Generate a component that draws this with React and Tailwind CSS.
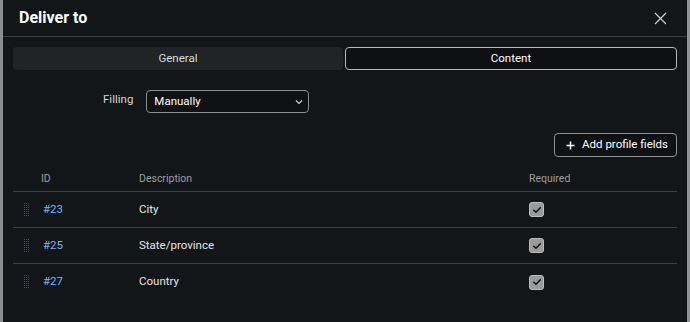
import React from "react";

const ROWS = [
  { id: "#23", desc: "City" },
  { id: "#25", desc: "State/province" },
  { id: "#27", desc: "Country" },
];

function DragHandle() {
  const dots = [];
  for (let r = 0; r < 7; r++) {
    for (let c = 0; c < 3; c++) {
      dots.push(<rect key={`${r}-${c}`} x={c * 2} y={r * 2} width="1" height="1" fill="#4a4d52" />);
    }
  }
  return (
    <svg width="6" height="14" viewBox="0 0 6 14">
      {dots}
    </svg>
  );
}

function Check() {
  return (
    <div className="w-[15px] h-[15px] rounded-[3px] bg-[#9a9a9a] border border-[#bdbdbd] flex items-center justify-center">
      <svg width="10" height="10" viewBox="0 0 10 10" fill="none">
        <path d="M1.8 5.2 L4 7.3 L8.3 2.8" stroke="#111" strokeWidth="1.5" strokeLinecap="round" strokeLinejoin="round" />
      </svg>
    </div>
  );
}

export default function App() {
  return (
    <div className="flex w-[690px] h-[322px] bg-[#8d8f91]" style={{ fontFamily: "Roboto, 'Noto Sans', sans-serif" }}>
      <div className="w-[3px] shrink-0 bg-[#8b8d8f]" />
      <div className="flex-1 bg-[#131619] flex flex-col">
        {/* Header */}
        <div className="h-[37px] flex items-center justify-between pl-[16px] pr-[20px] border-b border-[#3a3d41]">
          <h2 className="text-[16px] font-bold text-white">Deliver to</h2>
          <svg width="13" height="13" viewBox="0 0 13 13" fill="none">
            <path d="M1 1 L12 12 M12 1 L1 12" stroke="#c8c9cb" strokeWidth="1.3" />
          </svg>
        </div>

        <div className="px-[10px] pt-[10px]">
          {/* Tabs */}
          <div className="flex gap-[2px] h-[23px]">
            <div className="flex-1 rounded-[4px] bg-[#212427] flex items-center justify-center text-[11.5px] text-[#d8d9db]">
              General
            </div>
            <div className="flex-1 rounded-[4px] border border-[#b6b8ba] bg-[#0e1012] flex items-center justify-center text-[11.5px] text-white">
              Content
            </div>
          </div>

          {/* Filling */}
          <div className="flex items-center mt-[20px] pl-[90px]">
            <span className="text-[11.5px] text-[#d4d5d7] mr-[13px] -mt-[3px]">Filling</span>
            <div className="w-[163px] h-[23px] rounded-[4px] border border-[#8a8c8f] bg-[#0f1113] flex items-center justify-between pl-[7px] pr-[5px]">
              <span className="text-[11.5px] text-white">Manually</span>
              <svg width="8" height="6" viewBox="0 0 8 6" fill="none">
                <path d="M1 1.5 L4 4.5 L7 1.5" stroke="#d0d0d0" strokeWidth="1.2" />
              </svg>
            </div>
          </div>

          {/* Add button */}
          <div className="flex justify-end mt-[20px]">
            <button className="h-[24px] pl-[11px] pr-[8px] rounded-[4px] border border-[#8e9093] bg-[#0f1113] flex items-center gap-[7px] text-[11.5px] text-white">
              <svg width="9" height="9" viewBox="0 0 9 9" fill="none">
                <path d="M4.5 0.5 V8.5 M0.5 4.5 H8.5" stroke="#fff" strokeWidth="1.5" />
              </svg>
              Add profile fields
            </button>
          </div>

          {/* Table */}
          <div className="mt-[15px]">
            <div className="flex items-center h-[20px] border-b border-[#3d4044] text-[10.5px] text-[#9c9ea1] pb-[5px]">
              <div className="w-[126px] pl-[28px]">ID</div>
              <div className="w-[390px]">Description</div>
              <div>Required</div>
            </div>
            {ROWS.map((row, i) => (
              <div
                key={row.id}
                className={`flex items-center h-[36px] text-[11.5px] ${i < ROWS.length - 1 ? "border-b border-[#3d4044]" : ""}`}
              >
                <div className="w-[30px] pl-[11px] flex items-center">
                  <DragHandle />
                </div>
                <div className="w-[96px] text-[#7fb2ea]">{row.id}</div>
                <div className="w-[390px] text-[#e4e5e7]">{row.desc}</div>
                <Check />
              </div>
            ))}
          </div>
        </div>
      </div>
      <div className="w-[3px] shrink-0 bg-[#8f9193]" />
    </div>
  );
}
